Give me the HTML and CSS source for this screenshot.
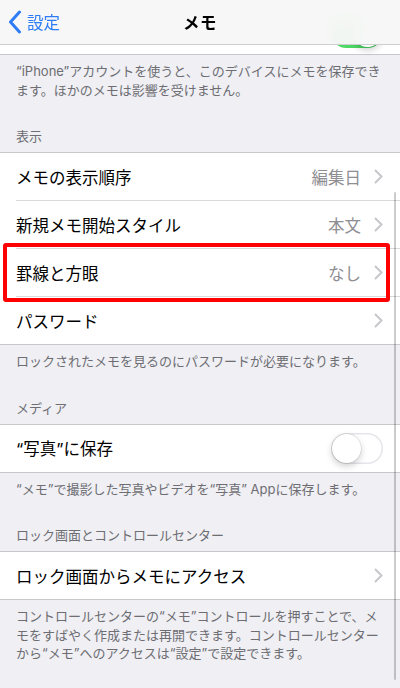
FILE: index.html
```html
<!DOCTYPE html>
<html lang="ja">
<head>
<meta charset="utf-8">
<title>メモ</title>
<link rel="stylesheet" href="styles.css">
</head>
<body>
<header class="nav">
  <a class="nav-back">
    <svg class="back-chevron" width="14" height="24" viewBox="0 0 14 24"><polyline points="11.5,2 2.5,12 11.5,22" fill="none" stroke="currentColor" stroke-width="3" stroke-linecap="round" stroke-linejoin="round"/></svg>
    <span>設定</span>
  </a>
  <h1 class="nav-title">メモ</h1>
  <span class="nav-spacer"></span>
</header>

<main class="page">
  <div class="group">
    <div class="cell cell-peek">
      <span class="switch switch-on"><span class="knob"></span></span>
    </div>
  </div>
  <p class="footer">“iPhone”アカウントを使うと、このデバイスにメモを保存できます。ほかのメモは影響を受けません。</p>

  <h2 class="header">表示</h2>
  <div class="group">
    <div class="cell">
      <span class="label">メモの表示順序</span>
      <span class="detail">編集日</span>
      <svg class="chevron" width="9" height="15" viewBox="0 0 9 15"><polyline points="1.5,1.5 7.5,7.5 1.5,13.5" fill="none" stroke="currentColor" stroke-width="2" stroke-linecap="round" stroke-linejoin="round"/></svg>
    </div>
    <div class="cell">
      <span class="label">新規メモ開始スタイル</span>
      <span class="detail">本文</span>
      <svg class="chevron" width="9" height="15" viewBox="0 0 9 15"><polyline points="1.5,1.5 7.5,7.5 1.5,13.5" fill="none" stroke="currentColor" stroke-width="2" stroke-linecap="round" stroke-linejoin="round"/></svg>
    </div>
    <div class="cell">
      <span class="label">罫線と方眼</span>
      <span class="detail">なし</span>
      <svg class="chevron" width="9" height="15" viewBox="0 0 9 15"><polyline points="1.5,1.5 7.5,7.5 1.5,13.5" fill="none" stroke="currentColor" stroke-width="2" stroke-linecap="round" stroke-linejoin="round"/></svg>
      <span class="highlight"></span>
    </div>
    <div class="cell">
      <span class="label">パスワード</span>
      <svg class="chevron" width="9" height="15" viewBox="0 0 9 15"><polyline points="1.5,1.5 7.5,7.5 1.5,13.5" fill="none" stroke="currentColor" stroke-width="2" stroke-linecap="round" stroke-linejoin="round"/></svg>
    </div>
  </div>
  <p class="footer">ロックされたメモを見るのにパスワードが必要になります。</p>

  <h2 class="header">メディア</h2>
  <div class="group">
    <div class="cell">
      <span class="label">“写真”に保存</span>
      <span class="switch"><span class="knob"></span></span>
    </div>
  </div>
  <p class="footer">“メモ”で撮影した写真やビデオを“写真” Appに保存します。</p>

  <h2 class="header">ロック画面とコントロールセンター</h2>
  <div class="group">
    <div class="cell">
      <span class="label">ロック画面からメモにアクセス</span>
      <svg class="chevron" width="9" height="15" viewBox="0 0 9 15"><polyline points="1.5,1.5 7.5,7.5 1.5,13.5" fill="none" stroke="currentColor" stroke-width="2" stroke-linecap="round" stroke-linejoin="round"/></svg>
    </div>
  </div>
  <p class="footer">コントロールセンターの“メモ”コントロールを押すことで、メモをすばやく作成または再開できます。コントロールセンターから“メモ”へのアクセスは“設定”で設定できます。</p>
</main>

<div class="scroll-indicator"></div>
</body>
</html>
```

FILE: styles.css
```css
* {
  box-sizing: border-box;
}

html, body {
  margin: 0;
  padding: 0;
}

body {
  width: 400px;
  min-height: 688px;
  background: #efeff4;
  font-family: "Inter", "Noto Sans CJK JP", "Noto Sans", sans-serif;
  color: #000;
  overflow: hidden;
}

/* Navigation bar (translucent, over content) */
.nav {
  position: fixed;
  top: 0;
  left: 0;
  right: 0;
  height: 45px;
  display: grid;
  grid-template-columns: 1fr auto 1fr;
  align-items: center;
  background: rgba(247, 247, 247, 0.95);
  -webkit-backdrop-filter: blur(14px);
  backdrop-filter: blur(14px);
  border-bottom: 1px solid #cfcfd2;
  z-index: 10;
}

.nav-back {
  display: flex;
  align-items: center;
  gap: 5px;
  padding-left: 8px;
  color: #2e7cf6;
  font-size: 16.5px;
}

.back-chevron {
  display: block;
}

.nav-title {
  margin: 0;
  font-size: 16.5px;
  font-weight: 700;
  letter-spacing: 0.5px;
}

/* Page */
.page {
  display: flex;
  flex-direction: column;
}

.group {
  background: #fff;
  border-top: 1px solid #c8c7cc;
  border-bottom: 1px solid #c8c7cc;
}

.group:first-child {
  border-top: none;
}

.cell {
  position: relative;
  display: flex;
  align-items: center;
  height: 48px;
  margin-left: 16px;
  padding-right: 17px;
  border-bottom: 1px solid #d9d9dd;
}

.cell:last-child {
  height: 47px;
  border-bottom: none;
}

.cell-peek,
.cell-peek:last-child {
  height: 54px;
  align-items: flex-end;
  justify-content: flex-end;
  padding-bottom: 6px;
}

.label {
  flex: 1;
  font-size: 16.5px;
  white-space: nowrap;
}

.detail {
  font-size: 16.5px;
  color: #8e8e93;
  margin-right: 13px;
}

.chevron {
  display: block;
  color: #c7c7cc;
  flex: none;
}

/* Switch */
.switch {
  position: relative;
  display: block;
  width: 52px;
  height: 31px;
  border-radius: 16px;
  background: #fff;
  box-shadow: inset 0 0 0 1.5px #e5e5ea;
  flex: none;
}

.switch .knob {
  position: absolute;
  top: 1px;
  left: 1px;
  width: 29px;
  height: 29px;
  border-radius: 50%;
  background: #fff;
  box-shadow: 0 3px 7px rgba(0, 0, 0, 0.2), 0 0 0 0.5px rgba(0, 0, 0, 0.14);
}

.switch-on {
  background: #4cd964;
  box-shadow: none;
}

.switch-on .knob {
  left: auto;
  right: 1px;
}

/* Section text */
.header {
  margin: 0;
  padding: 21px 16px 7px;
  font-size: 13px;
  font-weight: 400;
  line-height: 17px;
  color: #6d6d72;
}

.footer {
  margin: 0;
  padding: 7px 16px 8px;
  font-size: 13px;
  line-height: 18.5px;
  color: #6d6d72;
}

/* Red annotation box over a row */
.highlight {
  position: absolute;
  top: -6px;
  bottom: -6px;
  left: -13px;
  right: 10px;
  border: 4px solid #ff0000;
  border-radius: 3px;
  pointer-events: none;
}

/* iOS scroll indicator */
.scroll-indicator {
  position: fixed;
  top: 192px;
  bottom: 8px;
  right: 4px;
  width: 2.5px;
  border-radius: 2px;
  background: rgba(0, 0, 0, 0.2);
}
```
